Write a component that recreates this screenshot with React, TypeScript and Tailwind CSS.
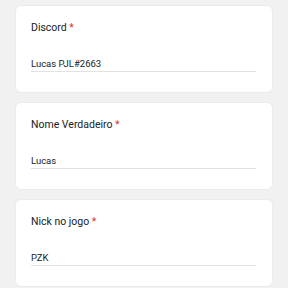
import React from 'react';

const fields = [
  { label: 'Discord', value: 'Lucas PJL#2663' },
  { label: 'Nome Verdadeiro', value: 'Lucas' },
  { label: 'Nick no jogo', value: 'PZK' },
];

export default function App() {
  return (
    <div
      className="w-[288px] h-[288px] overflow-hidden bg-[#f1f1f1] px-[15px] pt-[5px] flex flex-col gap-[9px]"
      style={{ fontFamily: 'Roboto, "Noto Sans", sans-serif' }}
    >
      {fields.map((f) => (
        <div
          key={f.label}
          className="shrink-0 h-[88px] bg-white rounded-[6px] border border-[#ebebeb] pl-[15px] pr-[16px] pt-[16px]"
        >
          <div className="text-[10.5px] leading-[12px] text-[#202124]">
            {f.label} <span className="text-[#d93025]">*</span>
          </div>
          <div className="mt-[24px] pb-[1px] border-b border-[#e2e2e2] text-[9.5px] leading-[12px] text-[#202124]">
            {f.value}
          </div>
        </div>
      ))}
    </div>
  );
}
